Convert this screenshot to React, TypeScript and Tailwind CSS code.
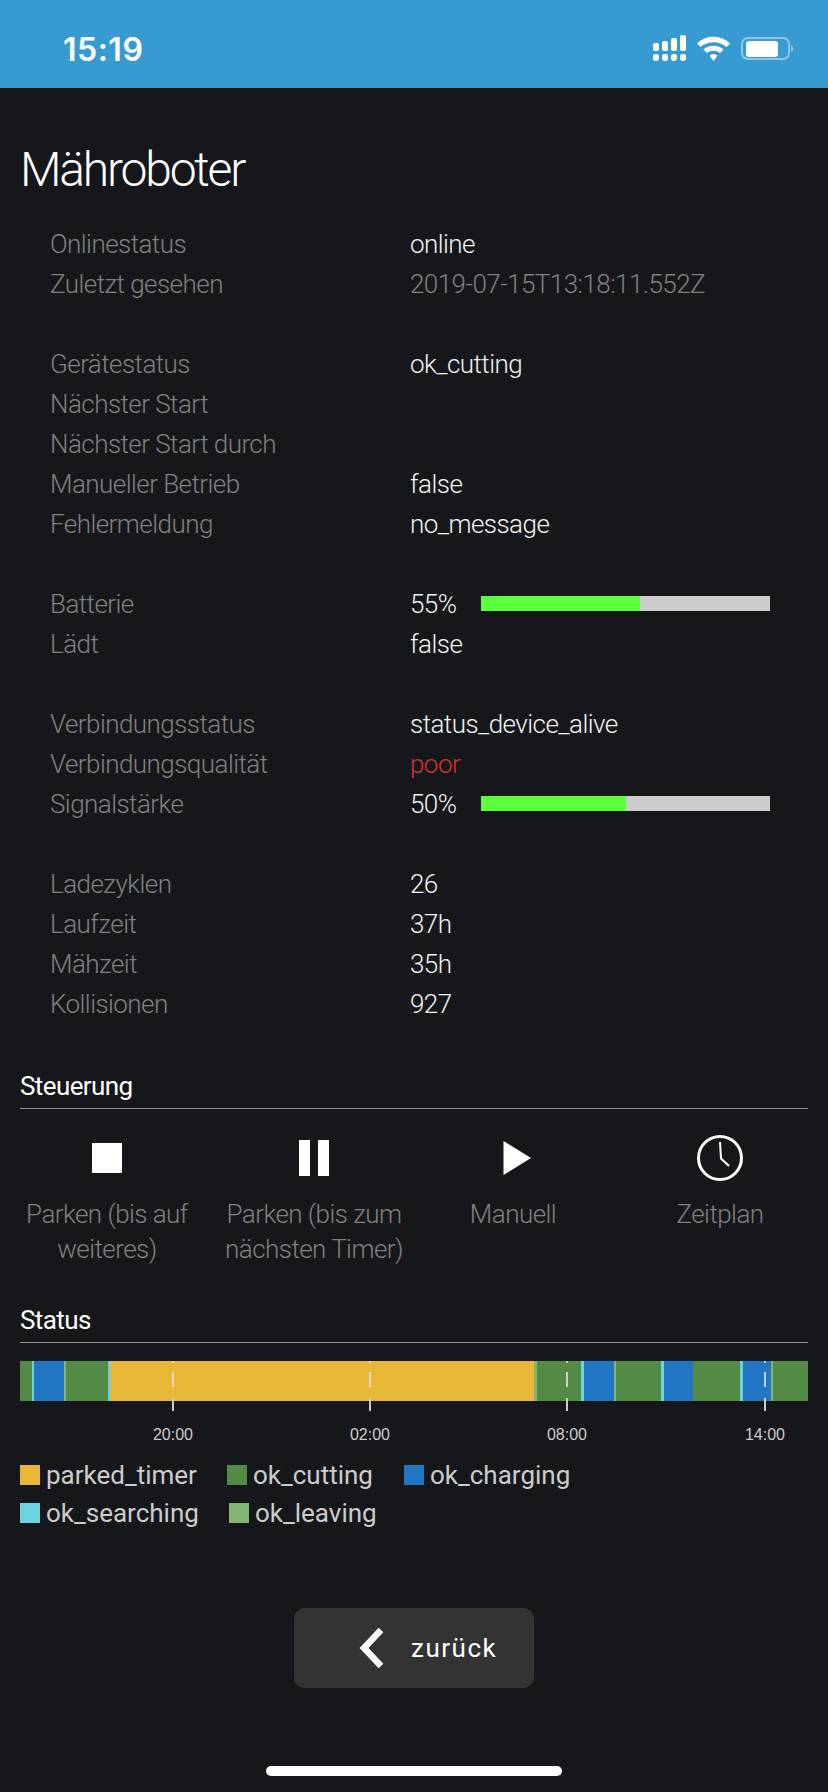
import React from "react";

type Row = { label: string; value?: string; percent?: number; tone?: "dim" | "bad" };

const groups: Row[][] = [
  [
    { label: "Onlinestatus", value: "online" },
    { label: "Zuletzt gesehen", value: "2019-07-15T13:18:11.552Z", tone: "dim" },
  ],
  [
    { label: "Gerätestatus", value: "ok_cutting" },
    { label: "Nächster Start" },
    { label: "Nächster Start durch" },
    { label: "Manueller Betrieb", value: "false" },
    { label: "Fehlermeldung", value: "no_message" },
  ],
  [
    { label: "Batterie", value: "55%", percent: 55 },
    { label: "Lädt", value: "false" },
  ],
  [
    { label: "Verbindungsstatus", value: "status_device_alive" },
    { label: "Verbindungsqualität", value: "poor", tone: "bad" },
    { label: "Signalstärke", value: "50%", percent: 50 },
  ],
  [
    { label: "Ladezyklen", value: "26" },
    { label: "Laufzeit", value: "37h" },
    { label: "Mähzeit", value: "35h" },
    { label: "Kollisionen", value: "927" },
  ],
];

const COLORS = {
  parked: "#e9b838",
  cutting: "#538a45",
  charging: "#2176c4",
  searching: "#6dd3e0",
  leaving: "#82b572",
};

// start/end in page px, chart begins at x=20
const segments: [number, number, string][] = [
  [20, 32, COLORS.cutting],
  [32, 34, COLORS.searching],
  [34, 64, COLORS.charging],
  [64, 66, COLORS.leaving],
  [66, 108, COLORS.cutting],
  [108, 110, COLORS.searching],
  [110, 534, COLORS.parked],
  [534, 537, COLORS.leaving],
  [537, 581, COLORS.cutting],
  [581, 584, COLORS.searching],
  [584, 614, COLORS.charging],
  [614, 616, COLORS.leaving],
  [616, 661, COLORS.cutting],
  [661, 664, COLORS.searching],
  [664, 693, COLORS.charging],
  [693, 740, COLORS.cutting],
  [740, 743, COLORS.searching],
  [743, 771, COLORS.charging],
  [771, 773, COLORS.leaving],
  [773, 808, COLORS.cutting],
];

const ticks: [number, string][] = [
  [173, "20:00"],
  [370, "02:00"],
  [567, "08:00"],
  [765, "14:00"],
];

const StatusIcons = () => (
  <svg width="142" height="28" viewBox="0 0 142 28" fill="white" className="block">
    {/* signal */}
    <rect x="0" y="9" width="6" height="8" rx="2" />
    <rect x="9" y="7" width="6" height="10" rx="2" />
    <rect x="18" y="4" width="6" height="13" rx="2" />
    <rect x="27" y="1" width="6" height="16" rx="2" />
    <rect x="0" y="20" width="6" height="7" rx="2.4" />
    <rect x="9" y="20" width="6" height="7" rx="2.4" />
    <rect x="18" y="20" width="6" height="7" rx="2.4" />
    <rect x="27" y="20" width="6" height="7" rx="2.4" />
    {/* wifi */}
    <path d="M44 9.5 C53 0.5 68 0.5 77 9.5 L73.5 13 C66.5 6.5 54.5 6.5 47.5 13 Z" />
    <path d="M50.5 15.5 C56 10.5 65 10.5 70.5 15.5 L67 19 C63.5 16 57.5 16 54 19 Z" />
    <path d="M56.5 21.5 C59 19.5 62 19.5 64.5 21.5 L60.5 27 Z" />
    {/* battery */}
    <rect x="89" y="4" width="47" height="21" rx="6" fill="none" stroke="white" strokeOpacity="0.45" strokeWidth="2" />
    <rect x="93" y="7" width="32" height="16" rx="3" />
    <path d="M138 11 C141 12 141 17 138 18 Z" fillOpacity="0.45" />
  </svg>
);

const controls = [
  {
    label: "Parken (bis auf weiteres)",
    box: "w-[174px]",
    icon: (
      <svg width="46" height="46" viewBox="0 0 46 46" fill="white">
        <rect x="8" y="8" width="30" height="30" />
      </svg>
    ),
  },
  {
    label: "Parken (bis zum nächsten Timer)",
    box: "w-[240px]",
    icon: (
      <svg width="46" height="46" viewBox="0 0 46 46" fill="white">
        <rect x="8" y="5" width="11" height="36" />
        <rect x="27" y="5" width="11" height="36" />
      </svg>
    ),
  },
  {
    label: "Manuell",
    box: "w-[158px]",
    icon: (
      <svg width="46" height="46" viewBox="0 0 46 46" fill="white" className="translate-x-[4px]">
        <path d="M9.5 6 L37 23 L9.5 40 Z" />
      </svg>
    ),
  },
  {
    label: "Zeitplan",
    box: "w-[176px] ml-[40px]",
    icon: (
      <svg width="46" height="46" viewBox="0 0 46 46" fill="none" stroke="white">
        <circle cx="23" cy="23" r="21.5" strokeWidth="3" />
        <path d="M23 7 L24 23.5 L32 31" strokeWidth="2" />
      </svg>
    ),
  },
];

const legend = [
  [
    { name: "parked_timer", color: COLORS.parked, box: "w-[207px]" },
    { name: "ok_cutting", color: COLORS.cutting, box: "w-[177px]" },
    { name: "ok_charging", color: COLORS.charging, box: "" },
  ],
  [
    { name: "ok_searching", color: COLORS.searching, box: "w-[209px]" },
    { name: "ok_leaving", color: COLORS.leaving, box: "" },
  ],
];

const StatusRow = ({ row }: { row: Row }) => {
  const valueColor =
    row.tone === "dim" ? "text-[#808080]" : row.tone === "bad" ? "text-[#d0342c]" : "text-[#f2f2f2]";
  return (
    <div className="flex h-10 items-center">
      <div className="w-[360px] shrink-0 text-[#808080]">{row.label}</div>
      {row.percent !== undefined ? (
        <div className="flex items-center">
          <div className={`w-[71px] ${valueColor}`}>{row.value}</div>
          <div className="h-[15px] w-[289px] -translate-y-[1px] bg-[#cccccc]">
            <div className="h-full bg-[#5bff3d]" style={{ width: `${row.percent}%` }} />
          </div>
        </div>
      ) : (
        <div className={valueColor}>{row.value}</div>
      )}
    </div>
  );
};

export default function App() {
  return (
    <div className="relative h-[1792px] w-[828px] overflow-hidden bg-[#16171b] font-['Roboto',sans-serif]">
      {/* Status bar */}
      <div className="flex h-[88px] items-center justify-between bg-[#379ad0] pl-[63px] pr-[33px] pt-[8px]">
        <span className="pt-[3px] font-['Inter',sans-serif] text-[32px] font-semibold tracking-[0.5px] text-white">15:19</span>
        <StatusIcons />
      </div>

      <h1 className="mt-[52px] pl-[20px] text-[48px] leading-[60px] font-light tracking-[-2.2px] text-white">Mähroboter</h1>

      <div className="mt-[24px] flex flex-col gap-10 pl-[50px] text-[26px] font-light tracking-[-0.55px]">
        {groups.map((group, i) => (
          <div key={i}>
            {group.map((row) => (
              <StatusRow key={row.label} row={row} />
            ))}
          </div>
        ))}
      </div>

      {/* Steuerung */}
      <div className="mx-[20px] mt-[44px] border-b border-[#8c8c8c] pb-[4px] text-[26px] leading-[36px] tracking-[-0.6px] text-white">
        Steuerung
      </div>
      <div className="mt-[26px] flex pl-[20px]">
        {controls.map((c) => (
          <div key={c.label} className={`flex flex-col items-center ${c.box}`}>
            {c.icon}
            <div className="mt-[16px] max-w-[206px] text-center text-[26px] leading-[35px] font-light tracking-[-0.55px] text-[#808080]">
              {c.label}
            </div>
          </div>
        ))}
      </div>

      {/* Status */}
      <div className="mx-[20px] mt-[35px] border-b border-[#8c8c8c] pb-[4px] text-[26px] leading-[36px] tracking-[-0.6px] text-white">
        Status
      </div>
      <svg width="828" height="104" viewBox="0 1344 828 104" className="block">
        {segments.map(([a, b, fill]) => (
          <rect key={a} x={a} y={1362} width={b - a} height={40} fill={fill} />
        ))}
        {ticks.map(([x, label]) => (
          <g key={label}>
            <line x1={x} x2={x} y1={1362} y2={1402} stroke="#e6e6e6" strokeWidth="2" strokeDasharray="2 9 15 11 15" opacity="0.8" />
            <line x1={x} x2={x} y1={1399} y2={1412} stroke="#cccccc" strokeWidth="2" />
            <text x={x} y={1441} textAnchor="middle" fill="#cccccc" fontSize="16" fontFamily="Liberation Sans, sans-serif">
              {label}
            </text>
          </g>
        ))}
      </svg>

      <div className="mt-[13px] flex flex-col gap-[8px] pl-[20px] text-[26px] leading-[30px] text-[#cccccc]">
        {legend.map((line, i) => (
          <div key={i} className="flex">
            {line.map((item) => (
              <div key={item.name} className={`flex items-center gap-[6px] ${item.box}`}>
                <span className="h-[20px] w-[20px]" style={{ backgroundColor: item.color }} />
                {item.name}
              </div>
            ))}
          </div>
        ))}
      </div>

      {/* Back button */}
      <div className="absolute left-[294px] top-[1608px]">
        <button className="flex h-[80px] w-[240px] items-center rounded-[10px] bg-[#333333] pl-[64px] text-[26px] tracking-[1.5px] text-white">
          <svg width="26" height="42" viewBox="0 0 26 42" fill="none" stroke="white" strokeWidth="6.5">
            <path d="M23 3 L6 21 L23 39" />
          </svg>
          <span className="ml-[27px]">zurück</span>
        </button>
      </div>

      {/* Home indicator */}
      <div className="absolute bottom-[16px] left-[266px] h-[10px] w-[296px] rounded-full bg-white" />
    </div>
  );
}
